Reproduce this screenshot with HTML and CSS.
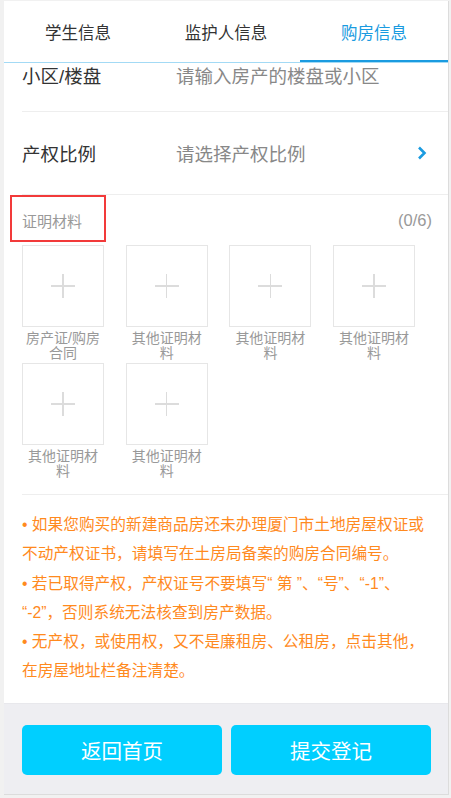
FILE: index.html
```html
<!DOCTYPE html>
<html lang="zh-CN">
<head>
	<meta charset="UTF-8">
	<title>购房信息</title>
	<link rel="stylesheet" href="styles.css">
</head>
<body>
	<div class="page">
		<div class="tabs">
			<div class="tab">学生信息</div>
			<div class="tab">监护人信息</div>
			<div class="tab active">购房信息</div>
		</div>

		<div class="form">
			<div class="row row-first">
				<span class="label">小区/楼盘</span>
				<span class="value">请输入房产的楼盘或小区</span>
			</div>
			<div class="row">
				<span class="label">产权比例</span>
				<span class="value">请选择产权比例</span>
				<svg class="arrow" width="12" height="16" viewBox="0 0 12 16">
					<path d="M3 2.5 L8.5 8 L3 13.5" fill="none" stroke="#1a9be0" stroke-width="2.6"/>
				</svg>
			</div>

			<div class="upload">
				<div class="upload-head">
					<span class="upload-title">证明材料</span>
					<span class="upload-count">(0/6)</span>
				</div>
				<div class="mark"></div>
				<div class="grid">
					<div class="item"><div class="box"></div><div class="caption">房产证/购房合同</div></div>
					<div class="item"><div class="box"></div><div class="caption">其他证明材料</div></div>
					<div class="item"><div class="box"></div><div class="caption">其他证明材料</div></div>
					<div class="item"><div class="box"></div><div class="caption">其他证明材料</div></div>
					<div class="item"><div class="box"></div><div class="caption">其他证明材料</div></div>
					<div class="item"><div class="box"></div><div class="caption">其他证明材料</div></div>
				</div>
			</div>

			<div class="notes">
				<p>• 如果您购买的新建商品房还未办理厦门市土地房屋权证或不动产权证书，请填写在土房局备案的购房合同编号。</p>
				<p>• 若已取得产权，产权证号不要填写“ 第 ”、“号”、“-1”、“-2”，否则系统无法核查到房产数据。</p>
				<p>• 无产权，或使用权，又不是廉租房、公租房，点击其他，在房屋地址栏备注清楚。</p>
			</div>
		</div>

		<div class="footer">
			<button class="btn">返回首页</button>
			<button class="btn">提交登记</button>
		</div>
	</div>
</body>
</html>
```

FILE: styles.css
```css
html, body {
	margin: 0;
	padding: 0;
}
body {
	background: #f1f1f1;
	font-family: "Liberation Sans", "Noto Sans CJK SC", sans-serif;
	color: #333;
}
.page {
	margin: 1px 0 0 4px;
	width: 444px;
	border-right: 1px solid #dcdcdc;
	background: #fff;
}
.tabs {
	display: flex;
	height: 61px;
	border-bottom: 1px solid #a3daf5;
}
.tab {
	flex: 1;
	display: flex;
	align-items: center;
	justify-content: center;
	font-size: 16.5px;
	color: #333;
}
.tab.active {
	color: #1a9be0;
	box-shadow: inset 0 -2px 0 #1a9be0;
}
.form {
	padding-left: 18px;
}
.row {
	display: flex;
	align-items: center;
	height: 82px;
	border-bottom: 1px solid #eee;
	font-size: 18.5px;
}
.row-first {
	height: 48px;
	align-items: flex-start;
}
.row-first .label, .row-first .value {
	line-height: 28px;
}
.label {
	width: 154px;
	color: #333;
}
.value {
	flex: 1;
	color: #888;
}
.arrow {
	margin-right: 20px;
}
.upload {
	position: relative;
	border-bottom: 1px solid #eee;
	padding-bottom: 15px;
}
.upload-head {
	display: flex;
	justify-content: space-between;
	align-items: center;
	height: 50px;
	padding-right: 16px;
	font-size: 15px;
	color: #999;
}
.upload-count {
	font-size: 16.5px;
}
.mark {
	position: absolute;
	left: -12px;
	top: 0;
	width: 92px;
	height: 43px;
	border: 2px solid #f23a3a;
}
.grid {
	display: grid;
	grid-template-columns: repeat(4, 82px);
	column-gap: 21.7px;
	row-gap: 2px;
}
.box {
	position: relative;
	width: 80px;
	height: 80px;
	border: 1px solid #e6e6e6;
}
.box::before, .box::after {
	content: "";
	position: absolute;
	background: #dcdcdc;
	left: 50%;
	top: 50%;
}
.box::before {
	width: 24px;
	height: 1.5px;
	margin: -0.75px 0 0 -12px;
}
.box::after {
	width: 1.5px;
	height: 24px;
	margin: -12px 0 0 -0.75px;
}
.caption {
	margin-top: 4px;
	padding: 0 2px;
	font-size: 14px;
	line-height: 15px;
	height: 30px;
	text-align: center;
	color: #999;
}
.notes {
	padding: 15px 18px 17px 0;
	color: #ff8a1e;
	font-size: 15.7px;
	line-height: 29.3px;
}
.notes p {
	margin: 0;
}
.footer {
	display: flex;
	gap: 9px;
	padding: 21px 17px 19px 18px;
	background: #eeeef2;
	border-top: 1px solid #e8e8ec;
	border-bottom: 1px solid #dcdcdc;
}
.btn {
	flex: 1;
	height: 50px;
	border: 0;
	border-radius: 5px;
	background: #00cfff;
	color: #fff;
	font-family: "Liberation Sans", "Noto Sans CJK SC", sans-serif;
	font-size: 20.5px;
}
```
